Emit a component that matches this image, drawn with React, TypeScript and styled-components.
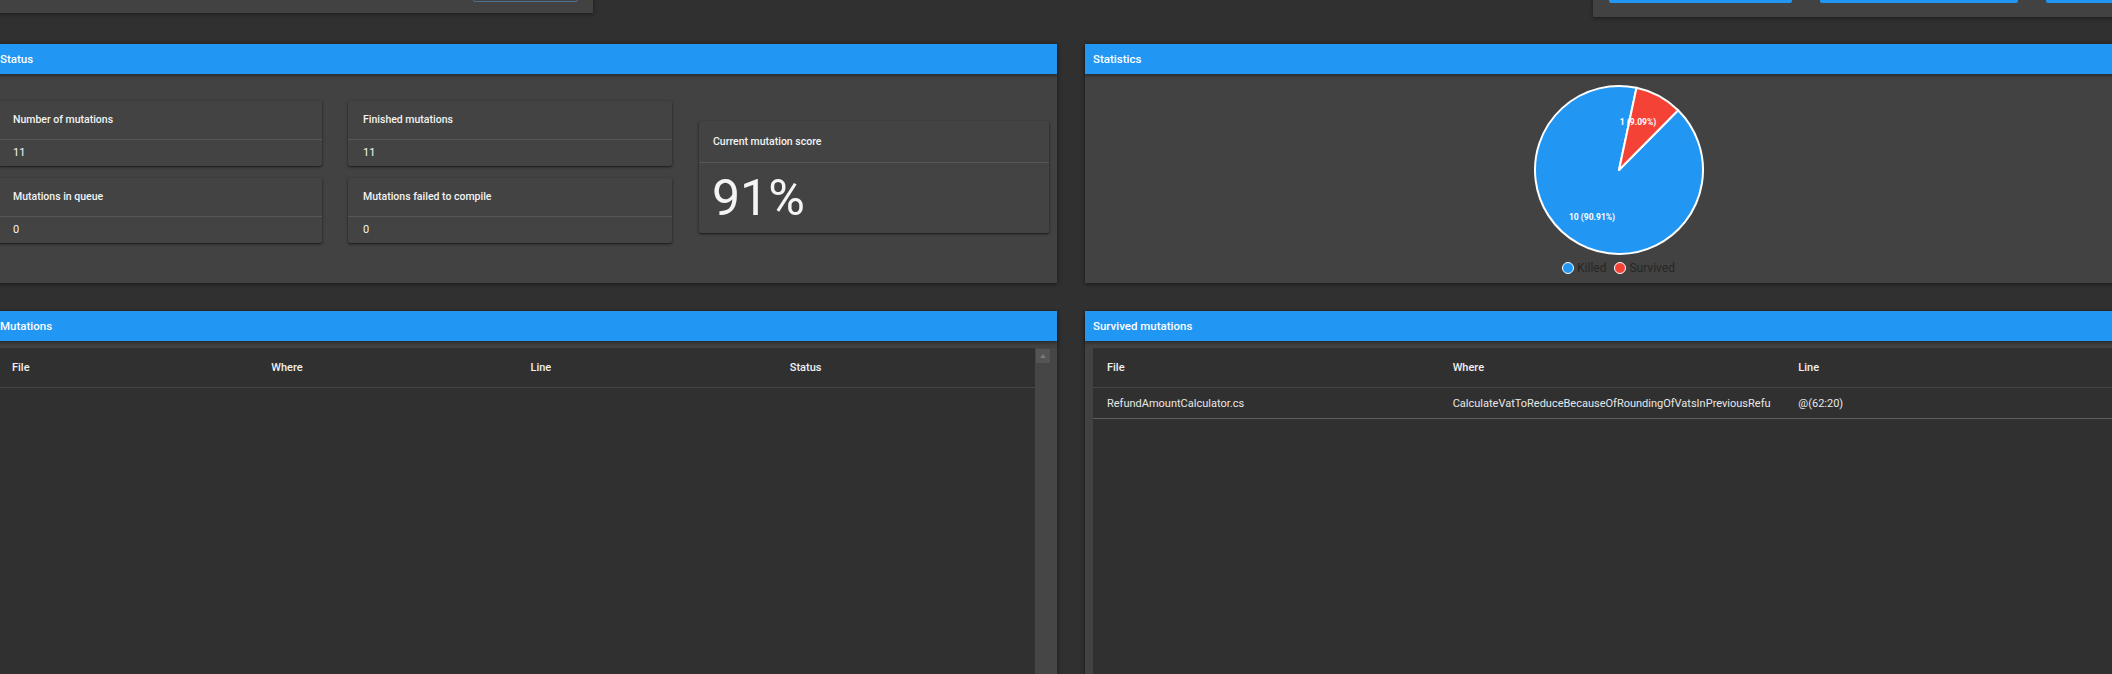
import React from "react";
import styled, { createGlobalStyle } from "styled-components";

const GlobalStyle = createGlobalStyle`
  html, body { margin: 0; padding: 0; background: #303030; overflow: hidden; }
  body { font-family: Roboto, "Noto Sans", Arial, sans-serif; color: #fff; }
  * { box-sizing: border-box; }
`;

const Page = styled.div`
  width: 2170px;
  margin-left: -10px;
  display: flex;
  flex-direction: column;
  gap: 27px;
`;

const TopRow = styled.div`
  display: flex;
  justify-content: space-between;
  align-items: flex-start;
  margin-top: -40px;
`;

const TopLeftCard = styled.div`
  width: 603px;
  height: 53px;
  background: #424242;
  box-shadow: 0 1px 4px rgba(0, 0, 0, 0.45);
  display: flex;
  justify-content: flex-end;
  align-items: flex-end;
  padding: 0 15px 11px 0;
`;

const OutlineButton = styled.div`
  width: 105px;
  height: 30px;
  border: 1px solid #4d6f92;
  border-radius: 2px;
`;

const TopRightCard = styled.div`
  width: 567px;
  height: 57px;
  background: #424242;
  box-shadow: 0 1px 4px rgba(0, 0, 0, 0.45);
  display: flex;
  align-items: flex-end;
  gap: 28px;
  padding: 0 0 14px 16px;
`;

const FilledButton = styled.div<{ $w: number }>`
  width: ${(p) => p.$w}px;
  height: 30px;
  background: #2196f3;
  border-radius: 2px;
  flex-shrink: 0;
`;

const Grid = styled.div`
  display: grid;
  grid-template-columns: 1067px 1067px;
  grid-template-rows: 239px 420px;
  column-gap: 28px;
  row-gap: 28px;
`;

const Panel = styled.section`
  background: #424242;
  box-shadow: 0 1px 4px rgba(0, 0, 0, 0.5);
  display: flex;
  flex-direction: column;
  min-width: 0;
`;

const PanelHeader = styled.header<{ $pad: number }>`
  height: 30px;
  flex-shrink: 0;
  background: #2196f3;
  display: flex;
  align-items: center;
  padding-left: ${(p) => p.$pad}px;
  font-size: 11.5px;
  font-weight: 500;
  color: #fff;
  position: relative;
  z-index: 1;
  box-shadow: 0 2px 3px rgba(0, 0, 0, 0.35);
`;

const StatusBody = styled.div`
  flex: 1;
  display: flex;
  align-items: center;
  gap: 27px;
  padding: 25px 8px 39px 8px;
`;

const SmallGrid = styled.div`
  display: grid;
  grid-template-columns: 324px 324px;
  column-gap: 26px;
  row-gap: 12px;
`;

const Card = styled.div`
  background: #434343;
  border-radius: 2px;
  box-shadow: 0 1px 3px rgba(0, 0, 0, 0.5), 0 1px 1px rgba(0, 0, 0, 0.2);
  display: flex;
  flex-direction: column;
`;

const ScoreCard = styled(Card)`
  width: 350px;
  margin-top: 10px;
`;

const CardTitle = styled.div<{ $h: number; $pad: number }>`
  height: ${(p) => p.$h}px;
  display: flex;
  align-items: center;
  padding: 0 ${(p) => p.$pad}px;
  font-size: 10.5px;
  font-weight: 500;
  color: #f2f2f2;
`;

const CardValue = styled.div<{ $h: number; $pad: number; $size: number }>`
  height: ${(p) => p.$h}px;
  display: flex;
  align-items: center;
  padding: 0 ${(p) => p.$pad}px;
  border-top: 1px solid #575757;
  font-size: ${(p) => p.$size}px;
  color: #f4f4f4;
  line-height: 1;
`;

const StatsBody = styled.div`
  flex: 1;
  display: flex;
  flex-direction: column;
  align-items: center;
  padding-top: 9px;
`;

const Legend = styled.div`
  display: flex;
  align-items: center;
  gap: 8px;
  margin-top: 4px;
  font-size: 12px;
  color: #262626;
`;

const LegendItem = styled.div`
  display: flex;
  align-items: center;
  gap: 3px;
`;

const LegendDot = styled.span<{ $c: string }>`
  width: 12px;
  height: 12px;
  border-radius: 50%;
  background: ${(p) => p.$c};
  border: 1.5px solid #fff;
  display: inline-block;
`;

const TableBody = styled.div`
  flex: 1;
  display: flex;
  padding: 7px 0 0 8px;
  min-height: 0;
`;

const Table = styled.div`
  flex: 1;
  background: #303030;
  display: flex;
  flex-direction: column;
  min-width: 0;
`;

const Row = styled.div<{ $cols: number; $h: number; $line: string }>`
  display: grid;
  grid-template-columns: repeat(${(p) => p.$cols}, 1fr);
  height: ${(p) => p.$h}px;
  border-bottom: 1px solid ${(p) => p.$line};
  flex-shrink: 0;
`;

const HeadCell = styled.div`
  display: flex;
  align-items: center;
  padding: 0 14px;
  font-size: 11px;
  font-weight: 500;
  color: #f0f0f0;
`;

const Cell = styled.div`
  display: flex;
  align-items: center;
  padding: 0 6px 0 14px;
  font-size: 11px;
  color: #e8e8e8;
  white-space: nowrap;
  overflow: hidden;
`;

const Scrollbar = styled.div`
  width: 22px;
  flex-shrink: 0;
  background: #464646;
  padding: 1px 0 0 1px;
`;

const ScrollButton = styled.div`
  width: 14px;
  height: 14px;
  background: #545454;
  display: flex;
  align-items: center;
  justify-content: center;
`;

const polar = (deg: number, r: number, c: number) => {
  const a = (deg * Math.PI) / 180;
  return [c + r * Math.sin(a), c - r * Math.cos(a)];
};

const Pie: React.FC = () => {
  const c = 87;
  const r = 84;
  const start = 12;
  const end = start + 360 * (1 / 11);
  const [x1, y1] = polar(start, r, c);
  const [x2, y2] = polar(end, r, c);
  const red = `M${c},${c} L${x1},${y1} A${r},${r} 0 0 1 ${x2},${y2} Z`;
  const blue = `M${c},${c} L${x2},${y2} A${r},${r} 0 1 1 ${x1},${y1} Z`;
  return (
    <svg width="174" height="174" viewBox="0 0 174 174">
      <path d={blue} fill="#2196f3" stroke="#fff" strokeWidth="2" strokeLinejoin="round" />
      <path d={red} fill="#f44336" stroke="#fff" strokeWidth="2" strokeLinejoin="round" />
      <text x="106" y="42" fill="#fff" fontSize="8.5" fontWeight="700" textAnchor="middle" fontFamily="Roboto, sans-serif">
        1 (9.09%)
      </text>
      <text x="60" y="137" fill="#fff" fontSize="8.5" fontWeight="700" textAnchor="middle" fontFamily="Roboto, sans-serif">
        10 (90.91%)
      </text>
    </svg>
  );
};

const statCards = [
  { title: "Number of mutations", value: "11" },
  { title: "Finished mutations", value: "11" },
  { title: "Mutations in queue", value: "0" },
  { title: "Mutations failed to compile", value: "0" },
];

const UpArrow: React.FC = () => (
  <svg width="6" height="4" viewBox="0 0 6 4">
    <path d="M0 4 L3 0 L6 4 Z" fill="#7a7a7a" />
  </svg>
);

export default function App() {
  return (
    <>
      <GlobalStyle />
      <Page>
        <TopRow>
          <TopLeftCard>
            <OutlineButton />
          </TopLeftCard>
          <TopRightCard>
            <FilledButton $w={183} />
            <FilledButton $w={198} />
            <FilledButton $w={183} />
          </TopRightCard>
        </TopRow>
        <Grid>
          <Panel>
            <PanelHeader $pad={10}>Status</PanelHeader>
            <StatusBody>
              <SmallGrid>
                {statCards.map((s) => (
                  <Card key={s.title}>
                    <CardTitle $h={38} $pad={15}>{s.title}</CardTitle>
                    <CardValue $h={27} $pad={15} $size={11}>{s.value}</CardValue>
                  </Card>
                ))}
              </SmallGrid>
              <ScoreCard>
                <CardTitle $h={41} $pad={14}>Current mutation score</CardTitle>
                <CardValue $h={71} $pad={13} $size={50}>91%</CardValue>
              </ScoreCard>
            </StatusBody>
          </Panel>
          <Panel>
            <PanelHeader $pad={8}>Statistics</PanelHeader>
            <StatsBody>
              <Pie />
              <Legend>
                <LegendItem>
                  <LegendDot $c="#2196f3" />
                  Killed
                </LegendItem>
                <LegendItem>
                  <LegendDot $c="#f44336" />
                  Survived
                </LegendItem>
              </Legend>
            </StatsBody>
          </Panel>
          <Panel>
            <PanelHeader $pad={10}>Mutations</PanelHeader>
            <TableBody>
              <Table>
                <Row $cols={4} $h={40} $line="#464646">
                  <HeadCell>File</HeadCell>
                  <HeadCell>Where</HeadCell>
                  <HeadCell>Line</HeadCell>
                  <HeadCell>Status</HeadCell>
                </Row>
              </Table>
              <Scrollbar>
                <ScrollButton>
                  <UpArrow />
                </ScrollButton>
              </Scrollbar>
            </TableBody>
          </Panel>
          <Panel>
            <PanelHeader $pad={8}>Survived mutations</PanelHeader>
            <TableBody>
              <Table>
                <Row $cols={3} $h={40} $line="#464646">
                  <HeadCell>File</HeadCell>
                  <HeadCell>Where</HeadCell>
                  <HeadCell>Line</HeadCell>
                </Row>
                <Row $cols={3} $h={31} $line="#5e5e5e">
                  <Cell>RefundAmountCalculator.cs</Cell>
                  <Cell>CalculateVatToReduceBecauseOfRoundingOfVatsInPreviousRefu</Cell>
                  <Cell>@(62:20)</Cell>
                </Row>
              </Table>
              <Scrollbar>
                <ScrollButton>
                  <UpArrow />
                </ScrollButton>
              </Scrollbar>
            </TableBody>
          </Panel>
        </Grid>
      </Page>
    </>
  );
}
